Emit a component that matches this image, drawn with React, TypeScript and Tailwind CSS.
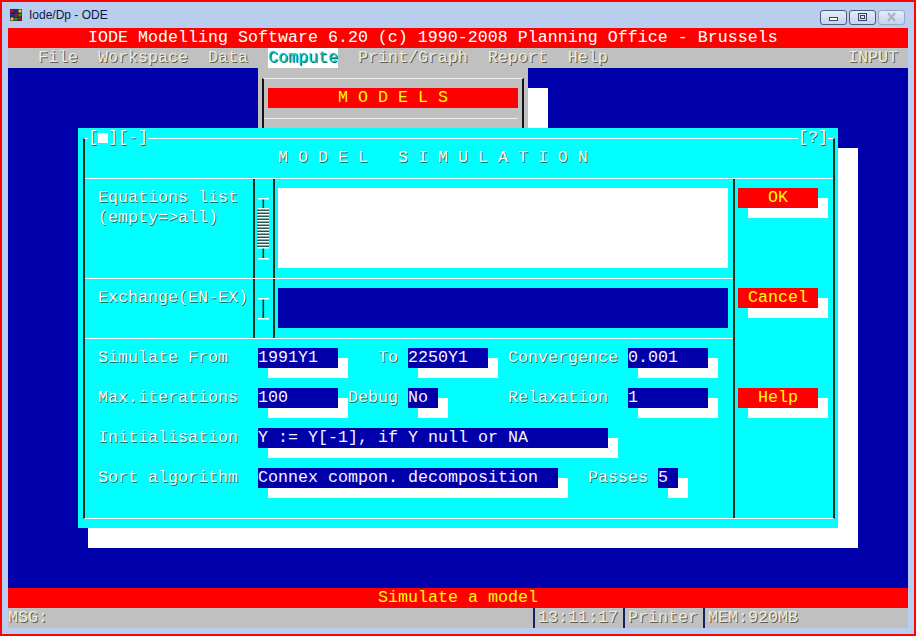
import React from 'react';

const mono = "font-['Liberation_Mono',monospace] text-[16.667px] leading-[20px] whitespace-pre";
const lbl = "text-white [text-shadow:1px_1px_0_#007a6a]";
const menuTxt = "text-[#ecece0] [text-shadow:1px_1px_0_#5a5a50]";

function Field({ w, children }: { w: string; children?: React.ReactNode }) {
  return (
    <div className={`${w} h-[20px] shrink-0 bg-[#0000aa] text-[#f4f4ff] shadow-[10px_10px_0_#ffffff]`}>
      {children}
    </div>
  );
}

function Button({ children }: { children: React.ReactNode }) {
  return (
    <div className="w-[80px] h-[20px] bg-[#ff0000] text-[#ffff00] text-center shadow-[10px_10px_0_#ffffff]">
      {children}
    </div>
  );
}

function Label({ w, children }: { w: string; children: React.ReactNode }) {
  return <div className={`${w} shrink-0 ${lbl}`}>{children}</div>;
}

function ScrollBar({ h, hatch }: { h: number; hatch: boolean }) {
  const bottom = hatch ? 79 : 39;
  const rows = [];
  if (hatch) {
    for (let y = 29; y < 69; y += 3) {
      rows.push(<rect key={y} x={2} y={y} width={12} height={1.5} fill="#ffffff" />);
    }
  }
  return (
    <svg width="18" height={h} viewBox={`0 0 18 ${h}`}>
      <rect x={7.5} y={19} width={1.6} height={bottom - 19} fill="#0b3b2b" />
      {hatch && <rect x={2} y={29} width={12} height={40} fill="#1d5a55" />}
      {rows}
      <rect x={3} y={19} width={11} height={1.5} fill="#ffffff" />
      <rect x={3} y={bottom} width={11} height={1.5} fill="#ffffff" />
    </svg>
  );
}

function CubeIcon() {
  const cells = ['#d01010', '#1030c0', '#e8d010', '#1030c0', '#d01010', '#20a020', '#e8d010', '#20a020', '#d01010'];
  return (
    <svg width="12" height="12" viewBox="0 0 12 12">
      <rect x="0" y="0" width="12" height="12" fill="#202040" />
      {cells.map((c, i) => (
        <rect key={i} x={(i % 3) * 4 + 0.5} y={Math.floor(i / 3) * 4 + 0.5} width="3" height="3" fill={c} />
      ))}
    </svg>
  );
}

function WinButton({ kind }: { kind: 'min' | 'max' | 'close' }) {
  const disabled = kind === 'close';
  return (
    <div
      className={`w-[27px] h-[15px] rounded-[3px] border flex items-center justify-center bg-gradient-to-b from-[#e4ecf8] to-[#c4d4ec] ${
        disabled ? 'border-[#9aa8c4]' : 'border-[#4c5c80]'
      }`}
    >
      <svg width="13" height="10" viewBox="0 0 13 10">
        {kind === 'min' && <rect x="2.5" y="5.5" width="8" height="3" fill="#ffffff" stroke="#3a4660" strokeWidth="1" />}
        {kind === 'max' && (
          <>
            <rect x="2.5" y="1.5" width="8" height="7" fill="none" stroke="#3a4660" strokeWidth="1" />
            <rect x="4.5" y="3.5" width="4" height="3" fill="none" stroke="#3a4660" strokeWidth="1" />
          </>
        )}
        {kind === 'close' && (
          <path d="M3 1 L10 9 M10 1 L3 9" stroke="#a8b2c8" strokeWidth="2.2" />
        )}
      </svg>
    </div>
  );
}

function Dialog() {
  return (
    <div className="absolute left-[70px] top-[60px] w-[760px] h-[400px] bg-[#00ffff] shadow-[20px_20px_0_#ffffff,10px_20px_0_#ffffff] pt-[10px] pl-[5px]">
      <div className="relative w-[752px] h-[381px] border-y border-y-white border-x-2 border-x-[#0a3320] flex flex-col">
        <div className={`absolute left-[3px] top-[-11px] h-[20px] bg-[#00ffff] ${lbl} inline-flex items-center`}>
          [<span className="inline-block w-[10px] h-[10px] bg-white" />][-]
        </div>
        <div className={`absolute right-[5px] top-[-11px] h-[20px] bg-[#00ffff] ${lbl}`}>[?]</div>

        <div className={`h-[39px] pt-[9px] pl-[193px] ${lbl}`}>M O D E L   S I M U L A T I O N</div>
        <div className="h-px bg-white" />

        <div className="flex flex-1">
          <div className="w-[648px] flex flex-col">
            <div className="h-[99px] flex">
              <div className={`w-[168px] pl-[13px] pt-[9px] ${lbl}`}>
                <div>Equations list</div>
                <div>(empty=&gt;all)</div>
              </div>
              <div className="w-[22px] border-x-2 border-x-[#0a3320]">
                <ScrollBar h={99} hatch />
              </div>
              <div className="flex-1 pl-[3px] pt-[9px]">
                <div className="w-[450px] h-[80px] bg-white" />
              </div>
            </div>
            <div className="h-px bg-white" />
            <div className="h-[59px] flex">
              <div className={`w-[168px] pl-[13px] pt-[9px] ${lbl}`}>Exchange(EN-EX)</div>
              <div className="w-[22px] border-x-2 border-x-[#0a3320]">
                <ScrollBar h={59} hatch={false} />
              </div>
              <div className="flex-1 pl-[3px] pt-[9px]">
                <div className="w-[450px] h-[40px] bg-[#0000aa]" />
              </div>
            </div>
            <div className="h-px bg-white" />
            <div className="flex-1 pl-[13px] pt-[9px] flex flex-col gap-[20px]">
              <div className="flex h-[20px]">
                <Label w="w-[160px]">Simulate From</Label>
                <Field w="w-[80px]">1991Y1</Field>
                <div className="w-[40px] shrink-0" />
                <Label w="w-[30px]">To</Label>
                <Field w="w-[80px]">2250Y1</Field>
                <div className="w-[20px] shrink-0" />
                <Label w="w-[120px]">Convergence</Label>
                <Field w="w-[80px]">0.001</Field>
              </div>
              <div className="flex h-[20px]">
                <Label w="w-[160px]">Max.iterations</Label>
                <Field w="w-[80px]">100</Field>
                <div className="w-[10px] shrink-0" />
                <Label w="w-[60px]">Debug</Label>
                <Field w="w-[30px]">No</Field>
                <div className="w-[70px] shrink-0" />
                <Label w="w-[120px]">Relaxation</Label>
                <Field w="w-[80px]">1</Field>
              </div>
              <div className="flex h-[20px]">
                <Label w="w-[160px]">Initialisation</Label>
                <Field w="w-[350px]">Y := Y[-1], if Y null or NA</Field>
              </div>
              <div className="flex h-[20px]">
                <Label w="w-[160px]">Sort algorithm</Label>
                <Field w="w-[300px]">Connex compon. decomposition</Field>
                <div className="w-[30px] shrink-0" />
                <Label w="w-[70px]">Passes</Label>
                <Field w="w-[20px]">5</Field>
              </div>
            </div>
          </div>
          <div className="flex-1 border-l-2 border-l-[#0a3320] pl-[3px] pt-[9px] flex flex-col gap-[80px]">
            <Button>OK</Button>
            <Button>Cancel</Button>
            <Button>Help</Button>
          </div>
        </div>
      </div>
    </div>
  );
}

function ModelsMenu() {
  return (
    <div className="absolute left-[250px] top-0 w-[270px] h-[80px] bg-[#c0c0c0] shadow-[20px_20px_0_#ffffff] pt-[10px] pl-[4px]">
      <div className="w-[262px] h-[70px] border-x-2 border-x-[#141414] border-t border-t-[#ececec] pt-[9px] pl-[4px]">
        <div className="w-[250px] h-[20px] bg-[#ff0000] text-[#ffff00] text-center">M O D E L S</div>
        <div className="mt-[10px] w-[254px] -ml-[4px] h-px bg-[#ececec]" />
      </div>
    </div>
  );
}

export default function App() {
  const menu = ['File', 'Workspace', 'Data', 'Compute', 'Print/Graph', 'Report', 'Help'];
  return (
    <div className="w-[916px] h-[636px] overflow-hidden border-2 border-[#ff0000] bg-[#b9cdee] flex flex-col">
      <div className="h-[26px] shrink-0 flex items-center pl-[8px] pr-[9px]">
        <CubeIcon />
        <span className="ml-[7px] font-['Liberation_Sans',Arial,sans-serif] text-[12px] text-[#0c1a48]">Iode/Dp - ODE</span>
        <div className="ml-auto mt-[4px] flex gap-[2px]">
          <WinButton kind="min" />
          <WinButton kind="max" />
          <WinButton kind="close" />
        </div>
      </div>

      <div className={`mx-[6px] w-[900px] h-[600px] flex flex-col ${mono}`}>
        <div className="h-[20px] bg-[#ff0000] text-white pl-[80px]">
          IODE Modelling Software 6.20 (c) 1990-2008 Planning Office - Brussels
        </div>
        <div className={`h-[20px] bg-[#c0c0c0] flex pl-[30px] pr-[10px] gap-[20px] ${menuTxt}`}>
          {menu.map((m) =>
            m === 'Compute' ? (
              <span key={m} className="bg-white text-[#00c8c8] [text-shadow:1px_1px_0_#007070]">
                {m}
              </span>
            ) : (
              <span key={m}>{m}</span>
            )
          )}
          <span className="ml-auto">INPUT</span>
        </div>

        <div className="relative flex-1 bg-[#0000aa]">
          <ModelsMenu />
          <Dialog />
        </div>

        <div className="h-[20px] bg-[#ff0000] text-[#ffff00] text-center">Simulate a model</div>
        <div className={`h-[20px] bg-[#c0c0c0] flex ${menuTxt}`}>
          <div className="w-[525px]">MSG:</div>
          <div className="w-[90px] border-l-2 border-l-[#142458] pl-[3px]">13:11:17</div>
          <div className="w-[80px] border-l-2 border-l-[#142458] pl-[3px]">Printer</div>
          <div className="flex-1 border-l-2 border-l-[#142458] pl-[3px]">MEM:920MB</div>
        </div>
      </div>

      <div className="flex-1" />
    </div>
  );
}
